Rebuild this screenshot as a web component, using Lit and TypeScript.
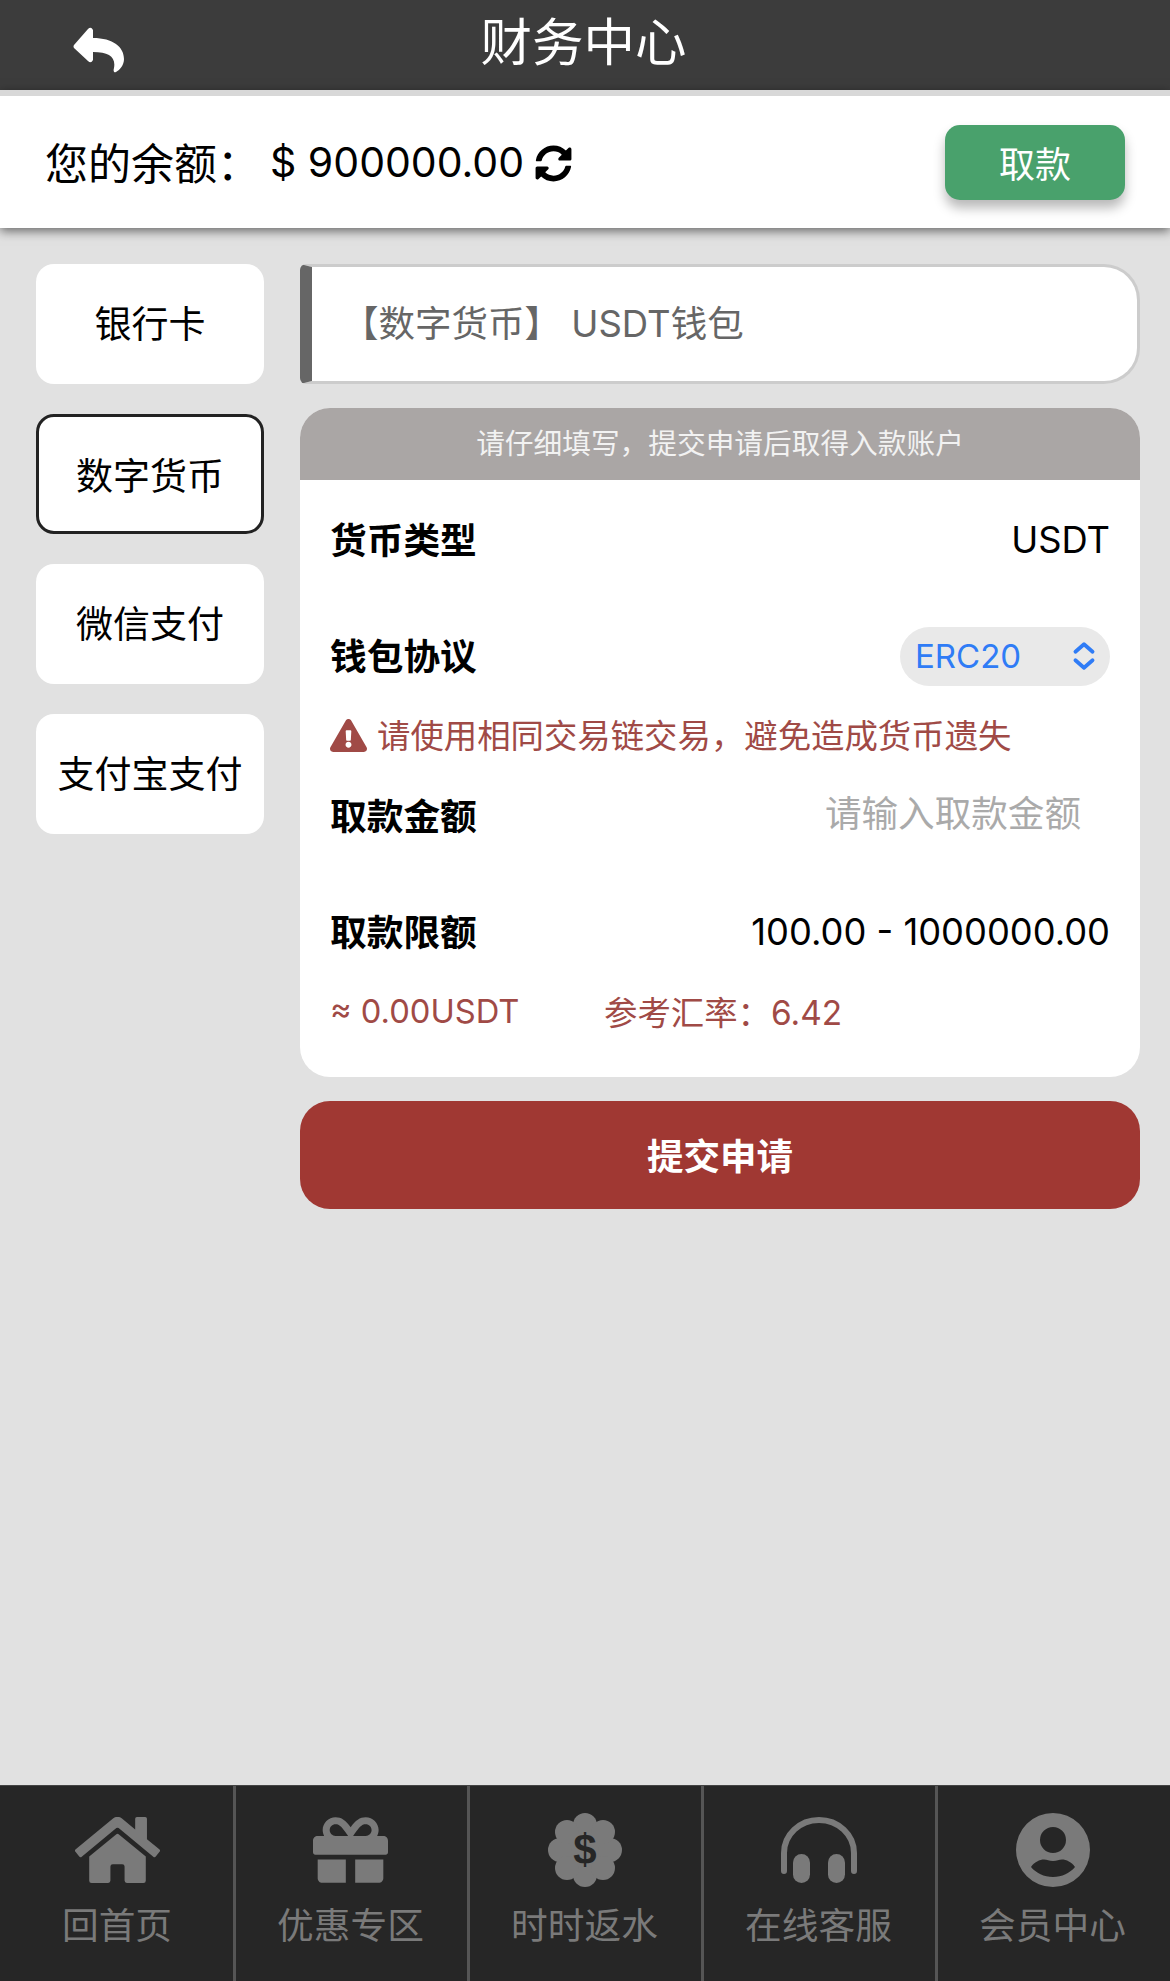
import { LitElement, html, css, svg } from 'lit';
import { customElement, state } from 'lit/decorators.js';

const TABS = ['银行卡', '数字货币', '微信支付', '支付宝支付'];

const ICON_HOME = svg`<svg class="ico" viewBox="0 32 576 448" width="85" height="66"><path d="M280.37 148.26L96 300.11V464a16 16 0 0 0 16 16l112.06-.29a16 16 0 0 0 15.92-16V368a16 16 0 0 1 16-16h64a16 16 0 0 1 16 16v95.64a16 16 0 0 0 16 16.05L464 480a16 16 0 0 0 16-16V300L295.67 148.26a12.19 12.19 0 0 0-15.3 0zM571.6 251.47L488 182.56V44.05a12 12 0 0 0-12-12h-56a12 12 0 0 0-12 12v72.61L318.47 43a48 48 0 0 0-61 0L4.34 251.47a12 12 0 0 0-1.6 16.9l25.5 31A12 12 0 0 0 45.15 301l235.22-193.74a12.19 12.19 0 0 1 15.3 0L530.9 301a12 12 0 0 0 16.9-1.6l25.5-31a12 12 0 0 0-1.7-16.93z"/></svg>`;

const ICON_GIFT = svg`<svg class="ico" viewBox="0 32 512 448" width="75" height="66"><path d="M32 448c0 17.7 14.3 32 32 32h160V320H32v128zm256 32h160c17.7 0 32-14.3 32-32V320H288v160zm192-320h-42.1c6.2-12.1 10.1-25.5 10.1-40 0-48.5-39.5-88-88-88-41.6 0-68.5 21.3-103 68.3-34.5-47-61.4-68.3-103-68.3-48.5 0-88 39.5-88 88 0 14.5 3.8 27.9 10.1 40H32c-17.7 0-32 14.3-32 32v80c0 8.8 7.2 16 16 16h480c8.8 0 16-7.2 16-16v-80c0-17.7-14.3-32-32-32zm-326.1 0c-22.1 0-40-17.9-40-40s17.9-40 40-40c19.9 0 34.6 3.3 86.1 80h-86.1zm206.1 0h-86.1c51.4-76.5 65.7-80 86.1-80 22.1 0 40 17.9 40 40s-17.9 40-40 40z"/></svg>`;

const ICON_BADGE = svg`<svg class="ico" viewBox="0 0 76 76" width="76" height="76">
  <circle cx="38" cy="38" r="27"/>
  <circle cx="38" cy="13" r="12"/><circle cx="38" cy="63" r="12"/>
  <circle cx="13" cy="38" r="12"/><circle cx="63" cy="38" r="12"/>
  <circle cx="20" cy="20" r="12"/><circle cx="56" cy="20" r="12"/>
  <circle cx="20" cy="56" r="12"/><circle cx="56" cy="56" r="12"/>
  <text x="38" y="52" text-anchor="middle" class="dollar">$</text>
</svg>`;

const ICON_PHONES = svg`<svg class="ico" viewBox="0 0 76 66" width="76" height="66">
  <path d="M3 54V36a35 33 0 0 1 70 0v18" fill="none" stroke="#7a7a7a" stroke-width="6" stroke-linecap="round"/>
  <rect x="12" y="37" width="17" height="29" rx="8.5"/>
  <rect x="47" y="37" width="17" height="29" rx="8.5"/>
</svg>`;

const ICON_USER = svg`<svg class="ico" viewBox="0 0 74 74" width="74" height="74">
  <path fill-rule="evenodd" d="M37 0a37 37 0 1 0 0 74a37 37 0 0 0 0-74zM37 14a13 13 0 1 1 0 26a13 13 0 0 1 0-26zM15 54c3-5 9-7.500 13-7.500c3 0 5 1.500 9 1.500s6-1.500 9-1.500c4 0 10 2.500 13 7.500c-5 6-13 10-22 10s-17-4-22-10z"/>
</svg>`;

const NAV = [
  { label: '回首页', icon: ICON_HOME },
  { label: '优惠专区', icon: ICON_GIFT },
  { label: '时时返水', icon: ICON_BADGE },
  { label: '在线客服', icon: ICON_PHONES },
  { label: '会员中心', icon: ICON_USER },
];

@customElement('app-root')
export class AppRoot extends LitElement {
  @state() active = 1;

  static styles = css`
    :host {
      display: block;
      font-family: Inter, 'Noto Sans CJK SC', sans-serif;
      color: #000;
    }
    .page {
      height: 1981px;
      display: flex;
      flex-direction: column;
      background: #e1e1e1;
      overflow: hidden;
    }
    .top {
      flex: none;
      height: 90px;
      background: #3c3c3c;
      display: flex;
      align-items: center;
      justify-content: center;
      position: relative;
      color: #fff;
      font-size: 51.5px;
      padding: 0 3px 14px 0;
      box-sizing: border-box;
    }
    .back {
      position: absolute;
      left: 73px;
      top: 27px;
    }
    .balance {
      flex: none;
      height: 138px;
      box-sizing: border-box;
      border-top: 6px solid #d8d8d8;
      background: #fff;
      box-shadow: 0 3px 10px rgba(0, 0, 0, 0.55);
      display: flex;
      align-items: center;
      padding: 0 45px;
      font-size: 41px;
      position: relative;
    }
    .balance .lbl {
      width: 225px;
      font-size: 43px;
      margin-bottom: 2px;
    }
    .balance .refresh {
      margin-left: 11px;
      margin-top: 2px;
    }
    .withdraw {
      margin-left: auto;
      width: 180px;
      height: 75px;
      border: none;
      border-radius: 15px;
      background: #49a16c;
      color: #fff;
      font: inherit;
      font-size: 36px;
      box-shadow: 0 8px 12px rgba(0, 0, 0, 0.28);
    }
    .main {
      flex: 1;
      display: flex;
      gap: 36px;
      padding: 36px 30px 0 36px;
    }
    .side {
      width: 228px;
      display: flex;
      flex-direction: column;
      gap: 30px;
    }
    .tab {
      height: 120px;
      box-sizing: border-box;
      border-radius: 18px;
      background: #fff;
      display: flex;
      align-items: center;
      justify-content: center;
      font-size: 37px;
      padding-bottom: 5px;
      cursor: pointer;
    }
    .tab.on {
      border: 3px solid #222;
      padding-bottom: 0;
    }
    .content {
      flex: 1;
      display: flex;
      flex-direction: column;
    }
    .title {
      height: 120px;
      box-sizing: border-box;
      background: #fff;
      border: 3px solid #ccc;
      border-left: 12px solid #666;
      border-radius: 6px 36px 36px 6px;
      display: flex;
      align-items: center;
      padding: 0 0 5px 30px;
      font-size: 36.5px;
      color: #666;
    }
    .card {
      margin-top: 24px;
      background: #fff;
      border-radius: 30px;
      overflow: hidden;
      padding-bottom: 45px;
    }
    .hint {
      height: 72px;
      background: #aaa6a5;
      color: #f2f2f2;
      font-size: 28.7px;
      display: flex;
      align-items: center;
      justify-content: center;
      padding-bottom: 5px;
      box-sizing: border-box;
      margin-bottom: 2px;
    }
    .row {
      height: 116px;
      padding: 0 30px;
      display: flex;
      align-items: center;
      justify-content: space-between;
      font-size: 36.3px;
    }
    .row b {
      font-weight: 700;
      font-size: 36.7px;
      margin-bottom: 5px;
    }
    .pill {
      width: 210px;
      height: 59px;
      box-sizing: border-box;
      border-radius: 30px;
      background: #e9e9e9;
      color: #2f7cf6;
      padding: 0 14px 0 15px;
      display: flex;
      align-items: center;
      justify-content: space-between;
      font-size: 33px;
    }
    .warn {
      height: 44px;
      box-sizing: border-box;
      padding: 0 30px 5px;
      display: flex;
      align-items: center;
      gap: 10px;
      color: #a04a46;
      font-size: 33.4px;
    }
    .warn svg {
      margin-top: 3px;
    }
    .amount {
      width: 400px;
      border: none;
      outline: none;
      padding: 0 29px 4px 0;
      background: transparent;
      text-align: right;
      font: inherit;
      font-size: 36.6px;
    }
    .amount::placeholder {
      color: #aaa;
    }
    .note {
      height: 42px;
      padding: 0 30px;
      display: flex;
      align-items: center;
      color: #a04a46;
      font-size: 32.7px;
    }
    .note span:first-child {
      width: 274px;
    }
    .rate {
      font-size: 33.4px;
      margin-bottom: 2px;
    }
    .submit {
      margin-top: 24px;
      height: 108px;
      border: none;
      border-radius: 30px;
      background: #a03833;
      color: #fff;
      font: inherit;
      font-size: 36.5px;
      font-weight: 700;
      padding-bottom: 3px;
    }
    .nav {
      flex: none;
      height: 196px;
      background: #262626;
      border-top: 1px solid #444;
      display: flex;
      box-sizing: border-box;
    }
    .item {
      flex: 0 0 calc(20% + 1px);
      margin-left: -1px;
      display: flex;
      flex-direction: column;
      align-items: center;
      color: #7a7a7a;
      font-size: 36.7px;
      border-left: 3px solid #555;
      padding-right: 3px;
      box-sizing: border-box;
    }
    .item:first-child {
      flex: 0 0 20%;
      margin-left: 0;
      border-left: none;
      padding-right: 0;
    }
    .iconbox {
      height: 76px;
      margin-top: 26px;
      display: flex;
      align-items: center;
      justify-content: center;
    }
    .ico {
      fill: #7a7a7a;
      display: block;
    }
    .dollar {
      fill: #262626;
      font-family: 'Liberation Sans', sans-serif;
      font-size: 42px;
      font-weight: 700;
    }
    .label {
      margin-top: 13px;
      line-height: 50px;
    }
  `;

  render() {
    return html`
      <div class="page">
        <div class="top">
          <svg class="back" viewBox="0 0 52 46" width="52" height="46" fill="#fff">
            <path d="M1 18L15 2Q18-1 20 3V11C40 11 51 20 51 32C51 38 47 43 43 45C41 46 40 44 41 41C43 30 36 25 20 25V33Q18 37 15 34L1 21Q0 19.500 1 18Z" />
          </svg>
          财务中心
        </div>
        <div class="balance">
          <span class="lbl">您的余额：</span>
          <span>$ 900000.00</span>
          <svg class="refresh" viewBox="0 0 512 512" width="37" height="37">
            <path d="M370.72 133.28C339.458 104.008 298.888 87.962 255.848 88c-77.458.068-144.328 53.178-162.791 126.85-1.344 5.363-6.122 9.15-11.651 9.15H24.103c-7.498 0-13.194-6.807-11.807-14.176C33.933 94.924 134.813 8 256 8c66.448 0 126.791 26.136 171.315 68.685L463.03 40.97C478.149 25.851 504 36.559 504 57.941V192c0 13.255-10.745 24-24 24H345.941c-21.382 0-32.09-25.851-16.971-40.971l41.75-41.749zM32 296h134.059c21.382 0 32.09 25.851 16.971 40.971l-41.75 41.75c31.262 29.273 71.835 45.319 114.876 45.28 77.418-.07 144.315-53.144 162.787-126.849 1.344-5.363 6.122-9.15 11.651-9.15h57.304c7.498 0 13.194 6.807 11.807 14.176C478.067 417.076 377.187 504 256 504c-66.448 0-126.791-26.136-171.315-68.685L48.97 471.03C33.851 486.149 8 475.441 8 454.059V320c0-13.255 10.745-24 24-24z" />
          </svg>
          <button class="withdraw">取款</button>
        </div>
        <div class="main">
          <div class="side">
            ${TABS.map(
              (t, i) => html`<div class="tab ${i === this.active ? 'on' : ''}" @click=${() => (this.active = i)}>${t}</div>`
            )}
          </div>
          <div class="content">
            <div class="title">【数字货币】 USDT钱包</div>
            <div class="card">
              <div class="hint">请仔细填写，提交申请后取得入款账户</div>
              <div class="row"><b>货币类型</b><span>USDT</span></div>
              <div class="row">
                <b>钱包协议</b>
                <div class="pill">
                  <span>ERC20</span>
                  <svg viewBox="0 0 22 28" width="24" height="30" fill="none" stroke="#2f7cf6" stroke-width="3.500" stroke-linecap="round" stroke-linejoin="round">
                    <path d="M3 10L11 3L19 10M3 18L11 25L19 18" />
                  </svg>
                </div>
              </div>
              <div class="warn">
                <svg viewBox="0 0 576 512" width="37" height="33" fill="#a04a46">
                  <path d="M569.517 440.013C587.975 472.007 564.806 512 527.94 512H48.054c-36.937 0-59.999-40.055-41.577-71.987L246.423 23.985c18.467-32.009 64.72-31.951 83.154 0l239.94 416.028zM288 354c-25.405 0-46 20.595-46 46s20.595 46 46 46 46-20.595 46-46-20.595-46-46-46zm-43.673-165.346l7.418 136c.347 6.364 5.609 11.346 11.982 11.346h48.546c6.373 0 11.635-4.982 11.982-11.346l7.418-136c.375-6.874-5.098-12.654-11.982-12.654h-63.383c-6.884 0-12.356 5.78-11.981 12.654z" />
                </svg>
                请使用相同交易链交易，避免造成货币遗失
              </div>
              <div class="row">
                <b>取款金额</b>
                <input class="amount" type="text" placeholder="请输入取款金额" />
              </div>
              <div class="row"><b>取款限额</b><span>100.00 - 1000000.00</span></div>
              <div class="note"><span>≈ 0.00USDT</span><span class="rate">参考汇率：6.42</span></div>
            </div>
            <button class="submit">提交申请</button>
          </div>
        </div>
        <div class="nav">
          ${NAV.map(
            (n) => html`<div class="item"><div class="iconbox">${n.icon}</div><div class="label">${n.label}</div></div>`
          )}
        </div>
      </div>
    `;
  }
}
